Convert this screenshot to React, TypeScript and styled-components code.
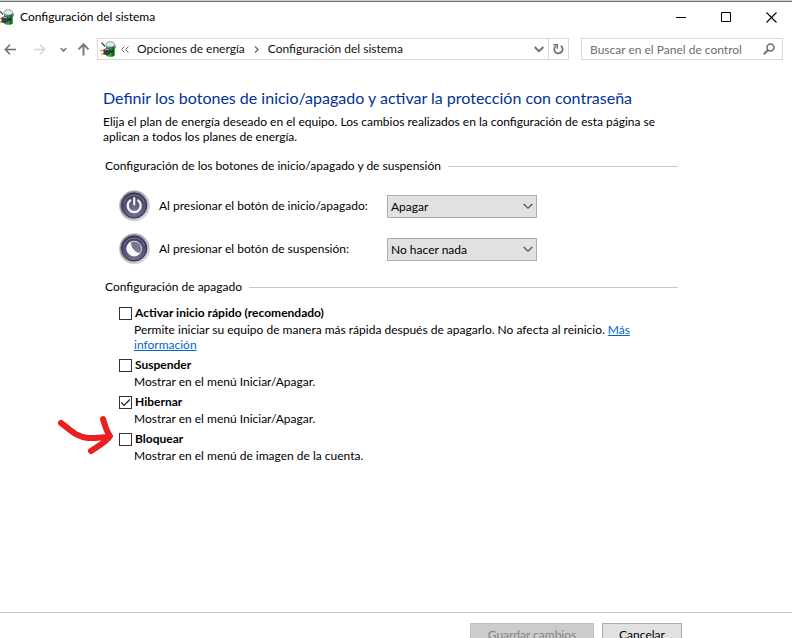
import React, { useState } from "react";
import styled, { createGlobalStyle } from "styled-components";

const GlobalStyle = createGlobalStyle`
  *, *::before, *::after { box-sizing: border-box; }
  html, body { margin: 0; overflow: hidden; background: #fff; }
  body, button, input, select {
    font-family: Lato, "Open Sans", sans-serif;
    font-size: 12px;
    color: #000;
  }
`;

const Window = styled.div`
  display: flex;
  flex-direction: column;
  min-height: calc(100vh + 20px);
  border-top: 1px solid #cfcfcf;
`;

const TitleBar = styled.header`
  display: flex;
  align-items: center;
  gap: 5px;
  height: 31px;
  border-top: 1px solid #6f6f6f;
`;

const Title = styled.h1`
  flex: 1;
  margin: 0;
  font-size: 12px;
  font-weight: 400;
  line-height: 16px;
`;

const CaptionButton = styled.button`
  display: grid;
  place-items: center;
  width: 41px;
  height: 28px;
  padding: 0;
  border: 0;
  background: none;
`;

const CaptionButtons = styled.div`
  display: flex;
  gap: 4px;
`;

const NavBar = styled.nav`
  display: flex;
  align-items: center;
  padding: 6px 9px 0 0;
`;

const NavButton = styled.button<{ $width: number }>`
  display: grid;
  place-items: center;
  width: ${(p) => p.$width}px;
  height: 22px;
  padding: 0;
  border: 0;
  background: none;
`;

const AddressBar = styled.div`
  display: flex;
  flex: 1;
  align-items: center;
  height: 22px;
  padding-left: 2px;
  border: 1px solid #d9d9d9;
`;

const Crumbs = styled.div`
  display: flex;
  flex: 1;
  align-items: center;
  gap: 8px;
  padding-left: 4px;
  line-height: 16px;
  white-space: nowrap;
`;

const Crumb = styled.a`
  color: #111;
  text-decoration: none;
`;

const RefreshButton = styled(NavButton)`
  height: 20px;
  border-left: 1px solid #d9d9d9;
`;

const SearchBox = styled.label`
  display: flex;
  align-items: center;
  width: 202px;
  height: 22px;
  margin-left: 12px;
  padding: 0 7px 0 8px;
  border: 1px solid #d9d9d9;
`;

const SearchInput = styled.input`
  flex: 1;
  min-width: 0;
  padding: 0;
  border: 0;
  outline: 0;
  background: none;
  &::placeholder { color: #6d6d6d; opacity: 1; }
`;

const Content = styled.main`
  flex: 1;
  padding: 27px 114px 0 103px;
`;

const Heading = styled.h2`
  margin: 0 0 5px;
  color: #003399;
  font-size: 16px;
  font-weight: 400;
  line-height: 22px;
  white-space: nowrap;
`;

const Intro = styled.p`
  margin: 0;
  line-height: 15px;
`;

const SectionTitle = styled.h3`
  display: flex;
  align-items: center;
  gap: 7px;
  margin: 14px 0 0;
  padding-left: 2px;
  font-size: 12px;
  font-weight: 400;
  line-height: 16px;
  white-space: nowrap;
  &::after {
    content: "";
    flex: 1;
    height: 1px;
    background: #c8c8c8;
  }
`;

const ActionList = styled.div`
  display: grid;
  gap: 11px;
  padding: 16px 0 0 16px;
`;

const ActionRow = styled.div`
  display: grid;
  grid-template-columns: 32px 220px 150px;
  align-items: center;
  gap: 8px;
  line-height: 16px;
  white-space: nowrap;
`;

const SelectFrame = styled.div`
  display: grid;
  align-items: center;
  & > * { grid-area: 1 / 1; }
  & > svg { justify-self: end; margin-right: 4px; pointer-events: none; }
`;

const Select = styled.select`
  appearance: none;
  width: 100%;
  height: 23px;
  padding: 0 20px 0 3px;
  border: 1px solid #adadad;
  border-radius: 0;
  background: #e1e1e1;
`;

const OptionList = styled.div`
  display: grid;
  gap: 5px;
  padding: 10px 0 0 16px;
`;

const OptionItem = styled.div`
  position: relative;
`;

const OptionLabel = styled.label`
  display: flex;
  align-items: center;
  gap: 3px;
  font-weight: 700;
  line-height: 16px;
`;

const TickFrame = styled.span`
  display: grid;
  & > * { grid-area: 1 / 1; }
  & > svg { pointer-events: none; }
`;

const Tick = styled.input`
  appearance: none;
  width: 13px;
  height: 13px;
  margin: 0;
  border: 1px solid #333;
  background: #fff;
`;

const OptionText = styled.p`
  margin: 1px 0 0;
  padding-left: 15px;
  line-height: 15px;
`;

const Link = styled.a`
  color: #0066cc;
`;

const Pointer = styled.svg`
  position: absolute;
  right: 100%;
  top: -18px;
  margin-right: 5px;
`;

const Footer = styled.footer`
  display: flex;
  justify-content: flex-end;
  gap: 8px;
  padding: 10px 110px 12px 0;
  border-top: 1px solid #c8c8c8;
`;

const FooterButton = styled.button<{ $width: number }>`
  width: ${(p) => p.$width}px;
  height: 23px;
  padding: 0;
  border: 1px solid #adadad;
  background: #e1e1e1;
  line-height: 16px;
  &:disabled {
    border-color: #bfbfbf;
    background: #cccccc;
    color: #838383;
  }
`;

const PowerPlanIcon = ({ clipped = false }: { clipped?: boolean }) => (
  <svg width={clipped ? 15 : 17} height="17" viewBox={clipped ? "2 0 15 17" : "0 0 17 17"} aria-hidden="true">
    <path d="M12.5 3.5c3 0 3.600 2 2.600 4" fill="none" stroke="#666" strokeWidth="1" />
    <path d="M6 4.500V14.500c1.500 1.800 7 1.800 8.500 0V4.500z" fill="#27a63c" />
    <path d="M11.500 5v10.600c1.200 0 2.300-.4 3-1.100V4.500z" fill="#0c6e22" />
    <path d="M8 6.500v4" stroke="#7be488" strokeWidth="1.400" />
    <ellipse cx="10.200" cy="3.400" rx="4.300" ry="2.600" fill="#e6e9f4" stroke="#7d8396" strokeWidth=".8" />
    <path d="M1.500 1.500l3.500 4" stroke="#444" strokeWidth="1.200" />
    <path d="M0 9.500h4M1 13h4" stroke="#d8a21c" strokeWidth="1.700" />
    <path d="M3.500 8.500l3-1.500c3-.5 5 1.500 4.600 3.800-.4 2.300-3 3.700-5.600 3.200l-2-1z" fill="#3a3d40" />
    <path d="M5 9c1.500-1.200 3-1 4 0" fill="none" stroke="#a4a8ac" strokeWidth="1.200" />
    <path d="M10.500 11l3-1" stroke="#222" strokeWidth="1.500" />
  </svg>
);

const ArrowIcon = ({ dir, color }: { dir: "left" | "right" | "up"; color: string }) => {
  const shapes = {
    left: "M12 6.500H1.500M6 1.800L1.300 6.500L6 11.200",
    right: "M1 6.500H11.500M7 1.800L11.700 6.500L7 11.200",
    up: "M6.500 12.500V1.500M1.500 6.300L6.500 1.300L11.500 6.300",
  };
  return (
    <svg width="13" height="13" viewBox="0 0 13 13" fill="none" stroke={color} strokeWidth={dir === "up" ? 1.9 : 1.5} aria-hidden="true">
      <path d={shapes[dir]} />
    </svg>
  );
};

const Chevron = ({ size, color, weight }: { size: number; color: string; weight: number }) => (
  <svg width={size} height={size} viewBox={`0 0 ${size} ${size}`} fill="none" stroke={color} strokeWidth={weight} aria-hidden="true">
    <path d={`M.7 ${size * 0.3}L${size / 2} ${size * 0.72}L${size - 0.7} ${size * 0.3}`} />
  </svg>
);

const RoundButtonIcon = ({ kind }: { kind: "power" | "sleep" }) => (
  <svg width="32" height="32" viewBox="0 0 32 32" aria-hidden="true">
    <defs>
      <linearGradient id={`${kind}-ring`} x1="0" y1="0" x2="1" y2="1">
        <stop offset="0" stopColor="#6f7273" />
        <stop offset=".5" stopColor="#a9aaae" />
        <stop offset="1" stopColor="#e9e9ec" />
      </linearGradient>
      <radialGradient id={`${kind}-face`} cx=".5" cy=".75" r=".75">
        <stop offset="0" stopColor="#777797" />
        <stop offset=".55" stopColor="#55557a" />
        <stop offset="1" stopColor="#3a3a5c" />
      </radialGradient>
    </defs>
    <circle cx="15.500" cy="15.800" r="15.200" fill={`url(#${kind}-ring)`} stroke="#dcdcdf" strokeWidth=".6" />
    <circle cx="15.200" cy="15.500" r="12.600" fill={`url(#${kind}-face)`} stroke="#30304c" strokeWidth="1" />
    <path d="M5 12.500a10.700 10.700 0 0 1 20.400 0" fill="none" stroke="#8c8ca8" strokeWidth="1" opacity=".7" />
    {kind === "power" ? (
      <g fill="none" stroke="#f1f1f5" strokeLinecap="round">
        <path d="M11.300 10.400a6.500 6.500 0 1 0 7.800 0" strokeWidth="2.300" />
        <path d="M15.200 8v6.500" strokeWidth="2.200" />
      </g>
    ) : (
      <g>
        <circle cx="15.200" cy="15.500" r="7.300" fill="#77778f" stroke="#d7d7e0" strokeWidth="1" />
        <path d="M12.300 8.500A7.600 7.600 0 1 0 21.300 20C16.500 20 11 14 12.300 8.500z" fill="#f7f7fa" />
      </g>
    )}
  </svg>
);

const actions = [
  { id: "power", label: "Al presionar el botón de inicio/apagado:", value: "Apagar" },
  { id: "sleep", label: "Al presionar el botón de suspensión:", value: "No hacer nada" },
] as const;

const choices = ["No hacer nada", "Suspender", "Hibernar", "Apagar"];

const options = [
  {
    id: "fast",
    label: "Activar inicio rápido (recomendado)",
    text: "Permite iniciar su equipo de manera más rápida después de apagarlo. No afecta al reinicio.",
    link: "Más información",
  },
  { id: "suspend", label: "Suspender", text: "Mostrar en el menú Iniciar/Apagar." },
  { id: "hibernate", label: "Hibernar", text: "Mostrar en el menú Iniciar/Apagar." },
  { id: "lock", label: "Bloquear", text: "Mostrar en el menú de imagen de la cuenta.", marked: true },
];

export default function App() {
  const [checked, setChecked] = useState<Record<string, boolean>>({ hibernate: true });

  return (
    <>
      <GlobalStyle />
      <Window>
        <TitleBar>
          <PowerPlanIcon clipped />
          <Title>Configuración del sistema</Title>
          <CaptionButtons>
            <CaptionButton aria-label="Minimizar">
              <svg width="11" height="11" viewBox="0 0 11 11"><path d="M0 5.500h10" stroke="#000" /></svg>
            </CaptionButton>
            <CaptionButton aria-label="Maximizar">
              <svg width="11" height="11" viewBox="0 0 11 11"><path d="M.5.5h9v9h-9z" fill="none" stroke="#000" /></svg>
            </CaptionButton>
            <CaptionButton aria-label="Cerrar">
              <svg width="11" height="11" viewBox="0 0 11 11"><path d="M.5.5l10 10M10.500.5l-10 10" stroke="#000" strokeWidth="1.100" /></svg>
            </CaptionButton>
          </CaptionButtons>
        </TitleBar>

        <NavBar aria-label="Navegación">
          <NavButton $width={21} aria-label="Atrás"><ArrowIcon dir="left" color="#6b6b6b" /></NavButton>
          <NavButton $width={37} aria-label="Adelante"><ArrowIcon dir="right" color="#d4d4d4" /></NavButton>
          <NavButton $width={11} aria-label="Recientes"><Chevron size={7} color="#777" weight={1.5} /></NavButton>
          <NavButton $width={28} aria-label="Subir"><ArrowIcon dir="up" color="#757575" /></NavButton>
          <AddressBar>
            <PowerPlanIcon />
            <Crumbs>
              <svg width="8" height="7" viewBox="0 0 8 7" fill="none" stroke="#666" aria-hidden="true">
                <path d="M3.500.5l-3 3 3 3M7.500.5l-3 3 3 3" />
              </svg>
              <Crumb href="#energia">Opciones de energía</Crumb>
              <svg width="7" height="7" viewBox="0 0 7 7" fill="none" stroke="#666" strokeWidth="1.300" aria-hidden="true">
                <path d="M2 .5l3 3-3 3" />
              </svg>
              <Crumb href="#sistema">Configuración del sistema</Crumb>
            </Crumbs>
            <NavButton $width={19} aria-label="Historial"><Chevron size={10} color="#707070" weight={1.9} /></NavButton>
            <RefreshButton $width={20} aria-label="Actualizar">
              <svg width="11" height="12" viewBox="0 0 11 12" fill="none" stroke="#6f6f6f" strokeWidth="1.700">
                <path d="M2.600 3.100A4.200 4.200 0 1 0 7.800 2.800" />
                <path d="M.3 1.700h4v4" strokeWidth="1.500" />
              </svg>
            </RefreshButton>
          </AddressBar>
          <SearchBox>
            <SearchInput type="search" aria-label="Buscar" placeholder="Buscar en el Panel de control" />
            <svg width="12" height="12" viewBox="0 0 12 12" fill="none" stroke="#6f6f6f" aria-hidden="true">
              <circle cx="7.500" cy="4.500" r="3.500" strokeWidth="1.600" />
              <path d="M5 7L.8 11.200" strokeWidth="2" />
            </svg>
          </SearchBox>
        </NavBar>

        <Content>
          <Heading>Definir los botones de inicio/apagado y activar la protección con contraseña</Heading>
          <Intro>
            Elija el plan de energía deseado en el equipo. Los cambios realizados en la configuración de esta página se
            aplican a todos los planes de energía.
          </Intro>

          <SectionTitle>Configuración de los botones de inicio/apagado y de suspensión</SectionTitle>
          <ActionList>
            {actions.map((a) => (
              <ActionRow key={a.id}>
                <RoundButtonIcon kind={a.id} />
                <label htmlFor={a.id}>{a.label}</label>
                <SelectFrame>
                  <Select id={a.id} defaultValue={a.value}>
                    {choices.map((c) => <option key={c}>{c}</option>)}
                  </Select>
                  <Chevron size={10} color="#505050" weight={1.2} />
                </SelectFrame>
              </ActionRow>
            ))}
          </ActionList>

          <SectionTitle>Configuración de apagado</SectionTitle>
          <OptionList>
            {options.map((o) => (
              <OptionItem key={o.id}>
                <OptionLabel>
                  <TickFrame>
                    <Tick
                      type="checkbox"
                      checked={!!checked[o.id]}
                      onChange={(e) => setChecked({ ...checked, [o.id]: e.target.checked })}
                    />
                    {checked[o.id] && (
                      <svg width="13" height="13" viewBox="0 0 13 13" fill="none" stroke="#222" strokeWidth="1.200">
                        <path d="M2.300 6.500l2.800 2.900L10.800 3.500" />
                      </svg>
                    )}
                  </TickFrame>
                  {o.label}
                </OptionLabel>
                <OptionText>
                  {o.text}
                  {o.link && <> <Link href="#informacion">{o.link}</Link></>}
                </OptionText>
                {o.marked && (
                  <Pointer width="58" height="42" viewBox="0 0 58 42" fill="none" stroke="#e8201f" strokeWidth="6" strokeLinecap="round" strokeLinejoin="round" aria-hidden="true">
                    <path d="M5 10C15 17 20 24 32 25C40 25.500 46 24 53 24" />
                    <path d="M47 6C49 12 50 18 54 23C49 30 42 33 35 38" />
                  </Pointer>
                )}
              </OptionItem>
            ))}
          </OptionList>
        </Content>

        <Footer>
          <FooterButton $width={124} disabled>Guardar cambios</FooterButton>
          <FooterButton $width={80}>Cancelar</FooterButton>
        </Footer>
      </Window>
    </>
  );
}
